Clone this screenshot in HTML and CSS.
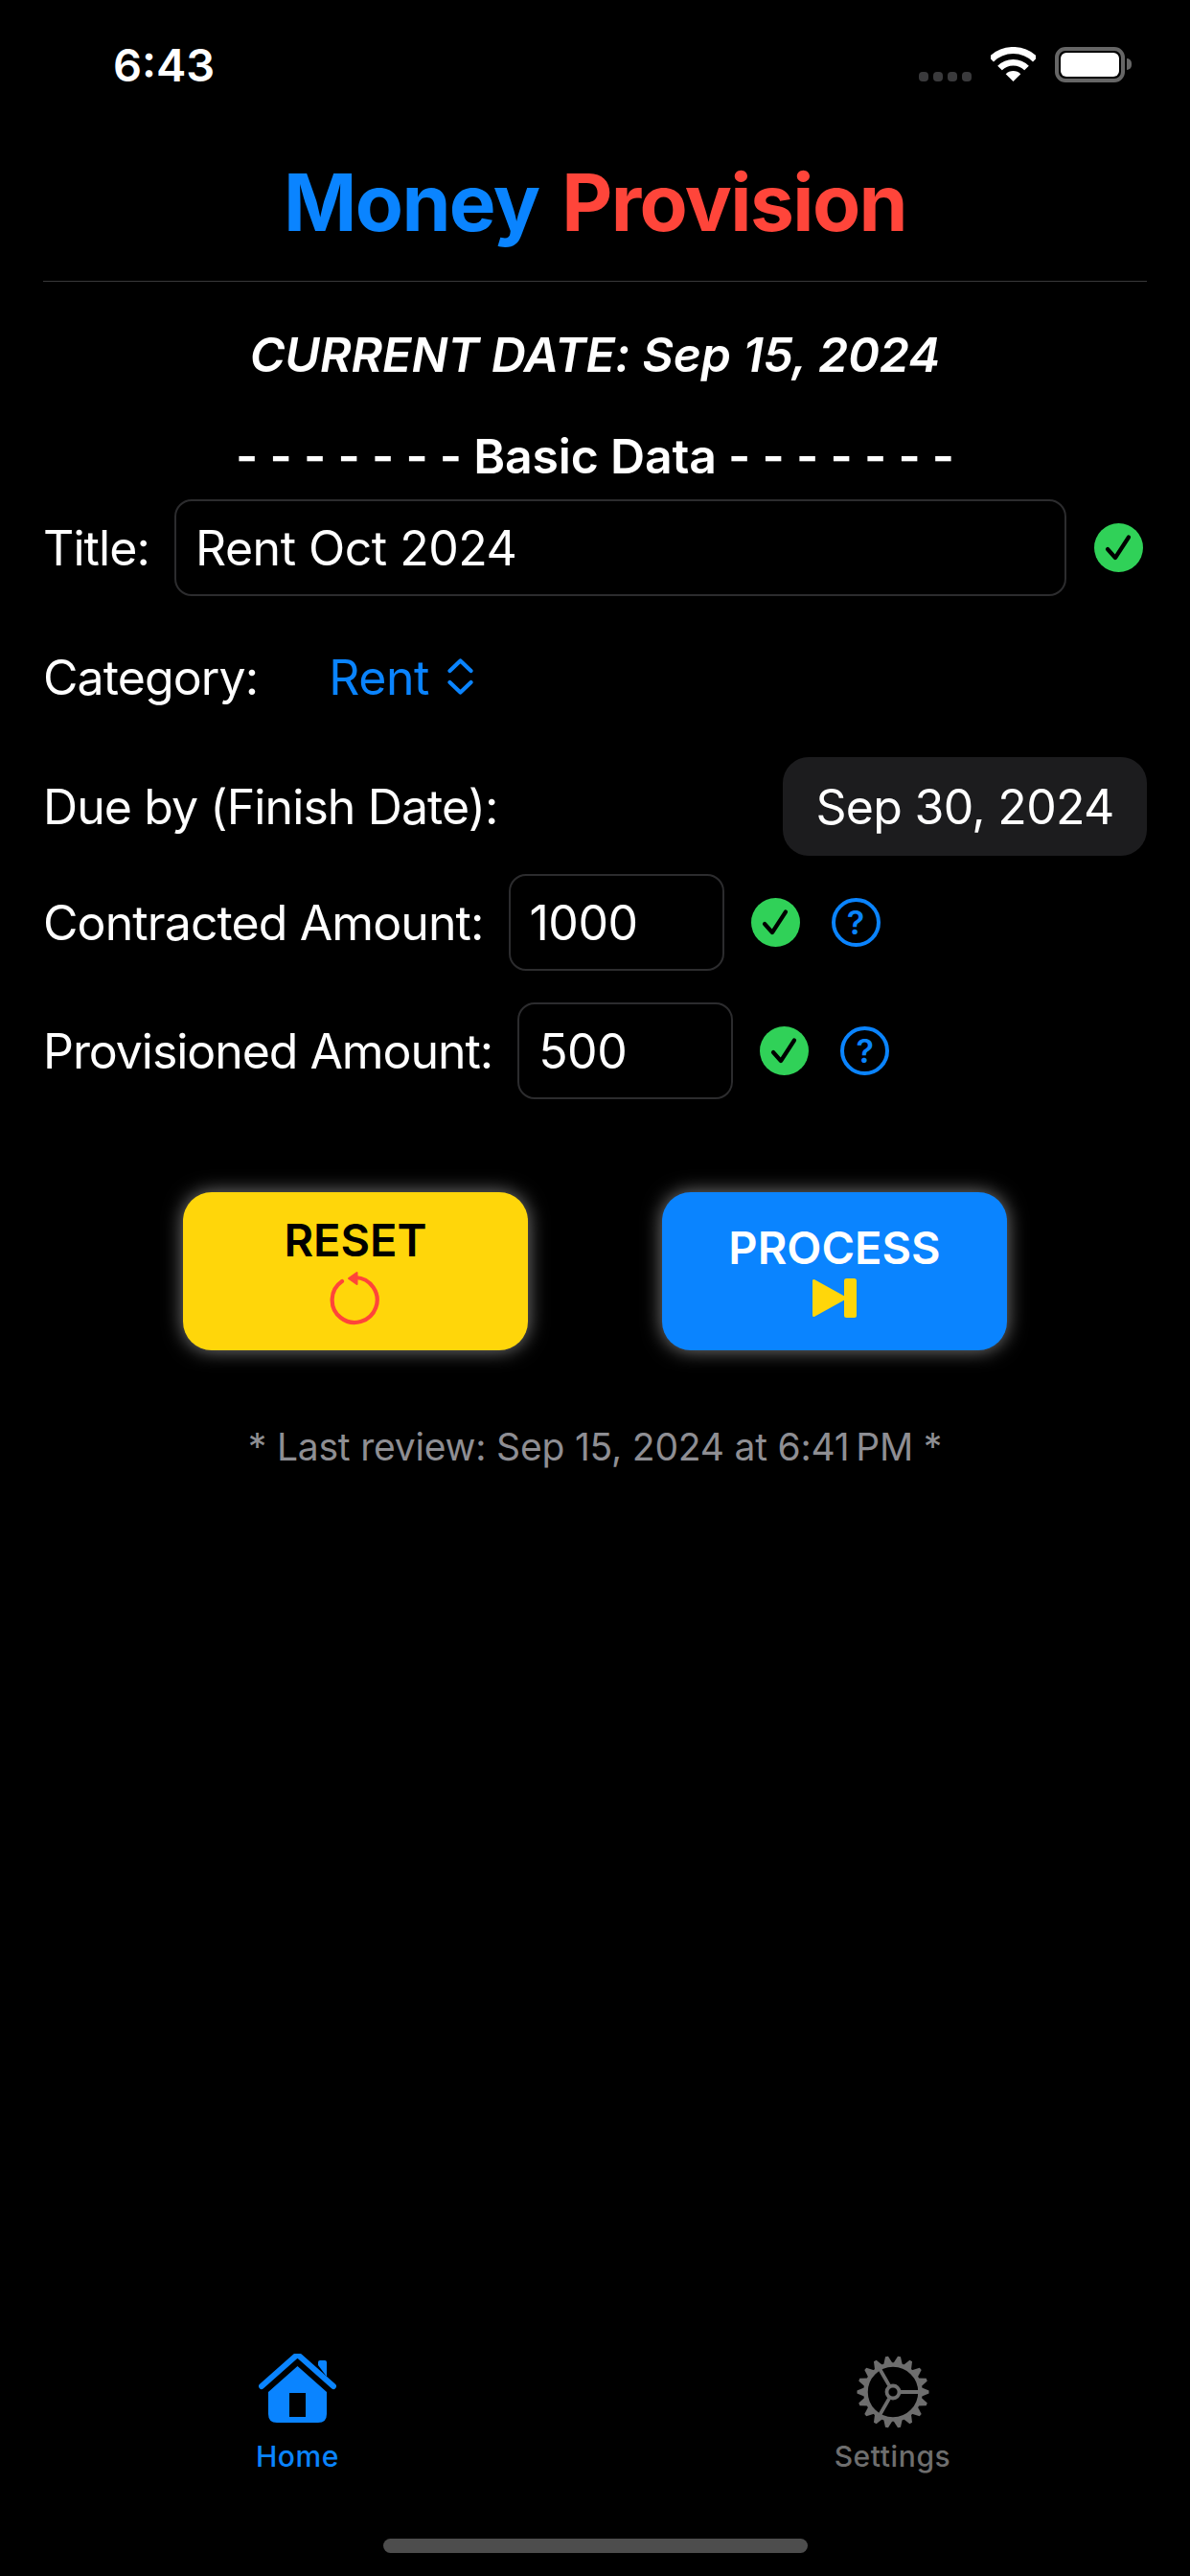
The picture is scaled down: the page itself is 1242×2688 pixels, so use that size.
FILE: index.html
```html
<!DOCTYPE html>
<html lang="en">
<head>
<meta charset="utf-8">
<title>Money Provision</title>
<link rel="stylesheet" href="styles.css">
</head>
<body>
<div class="app">
  <div class="status">
    <span class="time">6:43</span>
    <div class="status-icons">
      <div class="signal"><i></i><i></i><i></i><i></i></div>
      <svg class="wifi" viewBox="0 0 47 36"><path d="M.5 13A32.5 32.5 0 0 1 46.5 13" fill="none" stroke="#fff" stroke-width="7"/><path d="M9.5 22A19.7 19.7 0 0 1 37.5 22" fill="none" stroke="#fff" stroke-width="6.5"/><path d="M23.5 36L15.7 28.2A11 11 0 0 1 31.3 28.2Z" fill="#fff"/></svg>
      <div class="battery"><div class="battery-fill"></div></div>
      <div class="battery-nub"></div>
    </div>
  </div>
  <header class="header">
    <h1 class="brand"><span class="blue">Money</span> <span class="red">Provision</span></h1>
  </header>
  <main class="content">
    <p class="current-date">CURRENT DATE: Sep 15, 2024</p>
    <p class="section">- - - - - - - Basic Data - - - - - - -</p>
    <div class="row row-title">
      <span class="label">Title:</span>
      <div class="field field-grow">Rent Oct 2024</div>
      <svg class="check" viewBox="0 0 51 51"><circle cx="25.5" cy="25.5" r="25.5" fill="#30d158"/><path d="M14 27L22 36L36 14.500" fill="none" stroke="#000" stroke-width="4.200" stroke-linecap="round" stroke-linejoin="round"/></svg>
    </div>
    <div class="row row-category">
      <span class="label">Category:</span>
      <span class="picker">Rent</span>
      <svg class="chevrons" viewBox="0 0 29 38"><path d="M3.500 13L14.500 2.500L25.500 13M3.500 25L14.500 35.500L25.500 25" fill="none" stroke="#0a84ff" stroke-width="4.200" stroke-linecap="round" stroke-linejoin="round"/></svg>
    </div>
    <div class="row row-due">
      <span class="label">Due by (Finish Date):</span>
      <div class="date-pill">Sep 30, 2024</div>
    </div>
    <div class="row row-amount">
      <span class="label">Contracted Amount:</span>
      <div class="field field-amount">1000</div>
      <svg class="check" viewBox="0 0 51 51"><circle cx="25.5" cy="25.5" r="25.5" fill="#30d158"/><path d="M14 27L22 36L36 14.500" fill="none" stroke="#000" stroke-width="4.200" stroke-linecap="round" stroke-linejoin="round"/></svg>
      <span class="help">?</span>
    </div>
    <div class="row row-amount row-provisioned">
      <span class="label">Provisioned Amount:</span>
      <div class="field field-amount">500</div>
      <svg class="check" viewBox="0 0 51 51"><circle cx="25.5" cy="25.5" r="25.5" fill="#30d158"/><path d="M14 27L22 36L36 14.500" fill="none" stroke="#000" stroke-width="4.200" stroke-linecap="round" stroke-linejoin="round"/></svg>
      <span class="help">?</span>
    </div>
    <div class="actions">
      <button class="action action-reset">
        <span>RESET</span>
        <svg class="icon-reset" viewBox="0 0 56 59"><path d="M28 8A23.5 23.5 0 1 1 14 12" fill="none" stroke="#ff453a" stroke-width="4.2" stroke-linecap="round"/><path d="M21 9L29.5 3V15Z" fill="#ff453a" stroke="#ff453a" stroke-width="2" stroke-linejoin="round"/></svg>
      </button>
      <button class="action action-process">
        <span>PROCESS</span>
        <svg class="icon-process" viewBox="0 0 46 41"><path d="M1.5 2.5V38.5L34 20.5Z" fill="#ffd60a" stroke="#ffd60a" stroke-width="3" stroke-linejoin="round"/><rect x="33" y="0" width="13" height="41" rx="2.5" fill="#ffd60a"/></svg>
      </button>
    </div>
    <p class="review">* Last review: Sep 15, 2024 at 6:41&#8201;PM *</p>
  </main>
  <nav class="tabbar">
    <div class="tab tab-home">
      <svg class="tab-icon" viewBox="0 0 81 72"><path d="M62 12V9Q62 7 64 7H69Q71 7 71 9V24Z" fill="#0a84ff"/><path d="M3 34L38 3Q40.500 1 43 3L78 34" fill="none" stroke="#0a84ff" stroke-width="6" stroke-linecap="round" stroke-linejoin="round"/><path fill-rule="evenodd" d="M40.500 13L71 40V63Q71 72 62 72H19Q10 72 10 63V40ZM32 41V66H49V41Z" fill="#0a84ff"/></svg>
      <span>Home</span>
    </div>
    <div class="tab tab-settings">
      <svg class="tab-icon gear" viewBox="-38 -38 76 76">
        <defs><path id="tooth" d="M29 -5L37.500 -1.500V1.500L29 5Z" fill="#6e6e6e"/></defs>
        <circle r="28.5" fill="none" stroke="#6e6e6e" stroke-width="4.500"/>
        <circle r="6.500" fill="none" stroke="#6e6e6e" stroke-width="3.800"/>
        <path d="M8 0H28M-4 -6.900L-14 -24.200M-4 6.900L-14 24.200" fill="none" stroke="#6e6e6e" stroke-width="3.800"/>
        <use href="#tooth"/><use href="#tooth" transform="rotate(20)"/><use href="#tooth" transform="rotate(40)"/>
        <use href="#tooth" transform="rotate(60)"/><use href="#tooth" transform="rotate(80)"/><use href="#tooth" transform="rotate(100)"/>
        <use href="#tooth" transform="rotate(120)"/><use href="#tooth" transform="rotate(140)"/><use href="#tooth" transform="rotate(160)"/>
        <use href="#tooth" transform="rotate(180)"/><use href="#tooth" transform="rotate(200)"/><use href="#tooth" transform="rotate(220)"/>
        <use href="#tooth" transform="rotate(240)"/><use href="#tooth" transform="rotate(260)"/><use href="#tooth" transform="rotate(280)"/>
        <use href="#tooth" transform="rotate(300)"/><use href="#tooth" transform="rotate(320)"/><use href="#tooth" transform="rotate(340)"/>
      </svg>
      <span>Settings</span>
    </div>
  </nav>
  <div class="home-indicator"><div class="home-bar"></div></div>
</div>
</body>
</html>
```

FILE: styles.css
```css
* { box-sizing: border-box; }
html, body { margin: 0; padding: 0; background: #000; }
body { font-family: Inter, "Liberation Sans", sans-serif; color: #fff; }
p, h1 { margin: 0; }

.app { width: 1242px; height: 2688px; display: flex; flex-direction: column; background: #000; overflow: hidden; }

.status { height: 88px; flex: none; padding: 48px 61px 0 118px; display: flex; justify-content: space-between; align-items: flex-start; }
.time { font-size: 47px; line-height: 40px; font-weight: 600; letter-spacing: 0; }
.status-icons { display: flex; align-items: flex-start; margin-top: 1px; }
.signal { display: flex; gap: 5px; margin-top: 26px; margin-right: 20px; }
.signal i { width: 10px; height: 10px; border-radius: 4px; background: #3a3a3c; display: block; }
.wifi { width: 47px; height: 36px; margin-right: 20px; display: block; }
.battery { width: 73px; height: 37px; border: 4px solid #666; border-radius: 11px; padding: 2px; }
.battery-fill { width: 100%; height: 100%; background: #fff; border-radius: 6px; }
.battery-nub { width: 5px; height: 12px; background: #666; border-radius: 0 6px 6px 0; margin: 12px 0 0 2px; }

.header { height: 206px; flex: none; margin: 0 45px; border-bottom: 1px solid #38383a; display: flex; justify-content: center; }
.brand { font-size: 82px; line-height: 96px; font-weight: 700; letter-spacing: -1.6px; word-spacing: 6px; margin-top: 76px; }
.blue { color: #0a84ff; }
.red { color: #ff453a; }

.content { flex: 1; padding: 46px 45px 0; display: flex; flex-direction: column; }
.current-date { height: 60px; line-height: 60px; text-align: center; font-size: 50px; font-weight: 600; font-style: italic; letter-spacing: -0.1px; }
.section { height: 60px; line-height: 60px; margin-top: 46px; text-align: center; font-size: 50px; font-weight: 600; letter-spacing: -0.2px; }

.row { display: flex; align-items: center; font-size: 50px; letter-spacing: -0.5px; }
.label { white-space: nowrap; letter-spacing: -0.9px; }
.row-title { height: 101px; margin-top: 15px; gap: 26px; padding-right: 4px; }
.row-title .check { margin-left: 3px; }
.row-category { height: 100px; margin-top: 35px; }
.row-due { height: 103px; margin-top: 33px; justify-content: space-between; }
.row-amount { height: 101px; margin-top: 19px; gap: 26px; }
.row-provisioned { margin-top: 33px; }
.row-provisioned .label { letter-spacing: -1.05px; }

.field { height: 101px; border: 2px solid #2c2c2e; border-radius: 18px; padding: 0 20px; display: flex; align-items: center; }
.field-grow { flex: 1; }
.field-amount { width: 225px; }
.check { width: 51px; height: 51px; flex: none; display: block; }
.row-amount .check { margin-left: 2px; }
.help { width: 51px; height: 51px; flex: none; margin-left: 7px; border: 4px solid #0a84ff; border-radius: 50%; color: #0a84ff; font-size: 34px; font-weight: 600; letter-spacing: 0; display: flex; align-items: center; justify-content: center; }

.picker { color: #0a84ff; margin-left: 74px; }
.chevrons { width: 29px; height: 38px; margin-left: 18px; margin-top: -2px; }
.date-pill { width: 380px; height: 103px; border-radius: 27px; background: #1c1c1e; display: flex; align-items: center; justify-content: center; letter-spacing: -0.7px; }

.actions { display: flex; justify-content: center; gap: 140px; margin-top: 97px; }
.action { width: 360px; height: 165px; border: 0; border-radius: 30px; font: inherit; font-size: 47px; font-weight: 600; letter-spacing: 0; display: flex; flex-direction: column; align-items: center; justify-content: center; box-shadow: 0 0 20px rgba(255, 255, 255, 0.5); padding: 0; }
.action span { line-height: 48px; }
.action-reset { background: #ffd60a; color: #000; gap: 7px; }
.action-process { background: #0a84ff; color: #fff; gap: 8px; }
.icon-reset { width: 56px; height: 59px; display: block; }
.icon-process { width: 46px; height: 41px; display: block; }

.review { height: 50px; line-height: 50px; margin-top: 76px; text-align: center; font-size: 39px; color: #8e8e93; letter-spacing: -0.2px; }

.tabbar { flex: none; height: 160px; display: flex; }
.tab { flex: 1; display: flex; flex-direction: column; align-items: center; font-size: 30px; font-weight: 500; letter-spacing: 0.6px; }
.tab span { line-height: 36px; }
.tab-icon { display: block; }
.tab-home { color: #0a84ff; }
.tab-home .tab-icon { width: 81px; height: 72px; margin-bottom: 17px; }
.tab-settings { color: #6e6e6e; }
.tab-settings .tab-icon { width: 76px; height: 76px; margin-top: 2px; margin-bottom: 11px; }

.home-indicator { flex: none; height: 72px; display: flex; justify-content: center; padding-top: 33px; }
.home-bar { width: 443px; height: 15px; border-radius: 8px; background: #4d4d4d; }
```
